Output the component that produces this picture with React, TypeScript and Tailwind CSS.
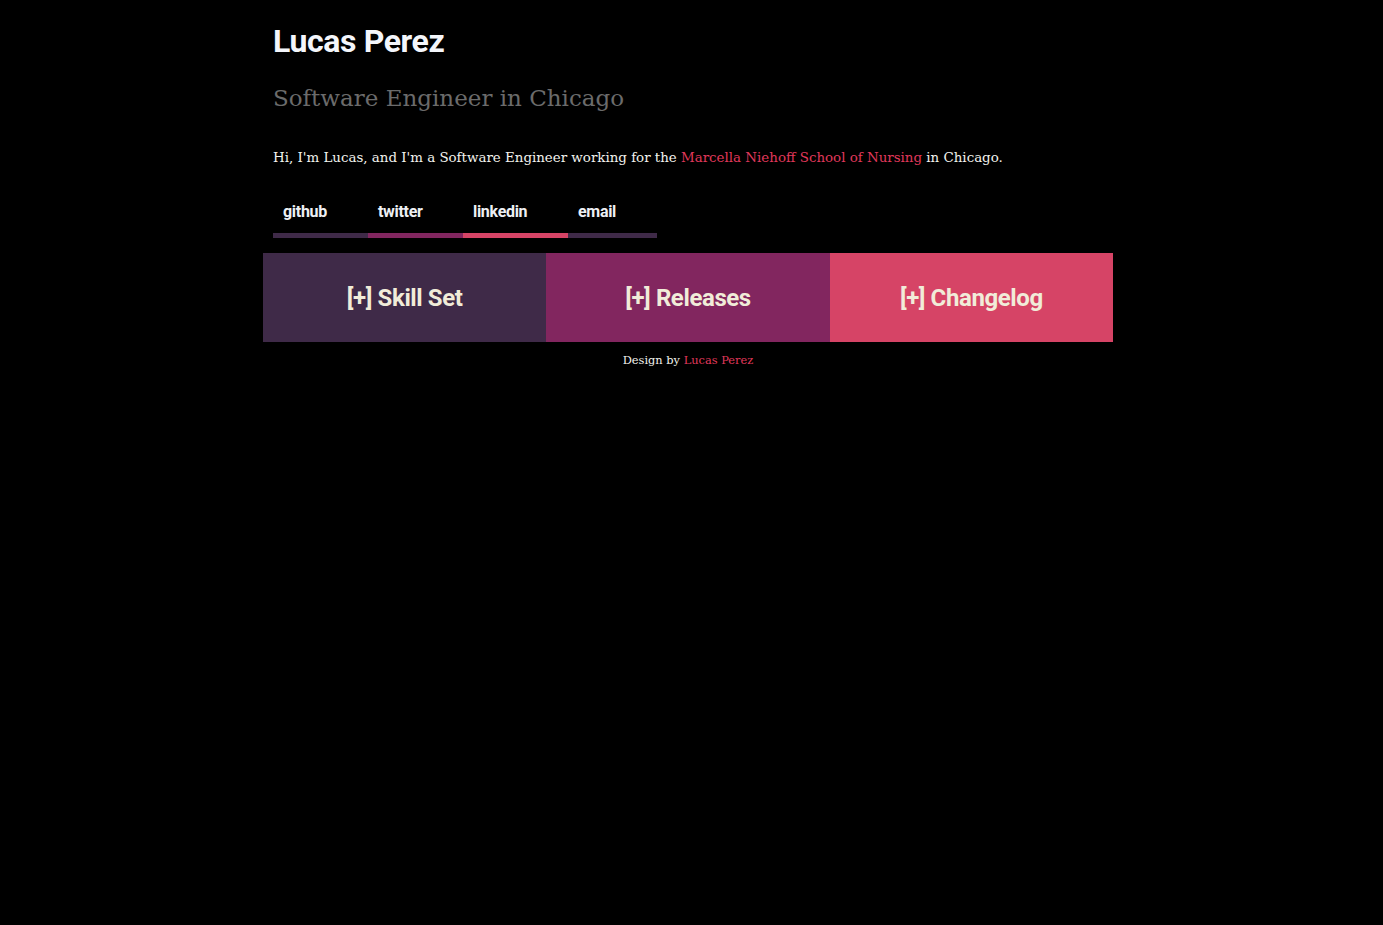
const serif = "font-['DejaVu_Serif','Liberation_Serif',serif]";
const sans = "font-['Roboto','Liberation_Sans',sans-serif]";

const links = [
  { label: 'github', bar: 'bg-[#3f2a48]', width: 'w-[95px]' },
  { label: 'twitter', bar: 'bg-[#82265f]', width: 'w-[95px]' },
  { label: 'linkedin', bar: 'bg-[#d64466]', width: 'w-[105px]' },
  { label: 'email', bar: 'bg-[#3f2a48]', width: 'w-[89px]' },
];

const panels = [
  { label: '[+] Skill Set', bg: 'bg-[#3f2a48]' },
  { label: '[+] Releases', bg: 'bg-[#82265f]' },
  { label: '[+] Changelog', bg: 'bg-[#d64466]' },
];

export default function App() {
  return (
    <div className="min-h-[925px] bg-black text-white">
      <div className="ml-[263px] w-[850px]">
        <header className="px-[10px] pt-[20px]">
          <h1 className={`${sans} text-[32px] font-bold leading-[42px] tracking-[-0.4px] text-[#f4f6fb]`}>
            Lucas Perez
          </h1>
          <h2 className={`${serif} mt-[18px] text-[23px] leading-[36px] text-[#6b6b6b]`}>
            Software Engineer in Chicago
          </h2>
          <p className={`${serif} mt-[32px] text-[13.4px] leading-[20px] text-[#f3f3ee]`}>
            Hi, I'm Lucas, and I'm a Software Engineer working for the{' '}
            <a href="#" className="text-[#e0385b]">Marcella Niehoff School of Nursing</a> in Chicago.
          </p>
          <nav className="mt-[32px] flex">
            {links.map((l) => (
              <a key={l.label} href="#" className={`${l.width} flex flex-col`}>
                <span className={`${sans} pl-[10px] text-[16px] font-bold leading-[24px] tracking-[-0.3px] text-[#eef0f4]`}>
                  {l.label}
                </span>
                <span className={`mt-[9px] h-[5px] ${l.bar}`} />
              </a>
            ))}
          </nav>
        </header>
        <div className="mt-[15px] grid grid-cols-3">
          {panels.map((p) => (
            <button
              key={p.label}
              className={`${p.bg} ${sans} flex h-[89px] items-center justify-center text-[24px] font-bold tracking-[-0.4px] text-[#f1ecd9]`}
            >
              {p.label}
            </button>
          ))}
        </div>
        <footer className={`${serif} mt-[10px] text-center text-[11.4px] leading-[16px] text-[#f3f3ee]`}>
          Design by <a href="#" className="text-[#e0385b]">Lucas Perez</a>
        </footer>
      </div>
    </div>
  );
}
